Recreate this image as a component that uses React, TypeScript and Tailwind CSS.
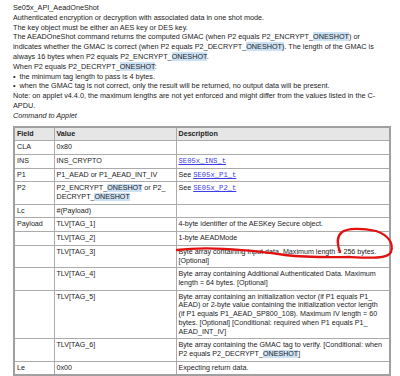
import React from "react";

const HL = ({ children }: { children: React.ReactNode }) => (
  <span className="bg-[#cde1f5]">{children}</span>
);

const Ref = ({ children }: { children: React.ReactNode }) => (
  <span className="font-['Liberation_Mono',monospace] text-[7.2px] text-[#3c3ce6] underline">{children}</span>
);

type Row = { field: string; value: React.ReactNode; desc: React.ReactNode };

const rows: Row[] = [
  { field: "CLA", value: "0x80", desc: "" },
  { field: "INS", value: "INS_CRYPTO", desc: <Ref>SE05x_INS_t</Ref> },
  { field: "P1", value: "P1_AEAD or P1_AEAD_INT_IV", desc: <>See <Ref>SE05x_P1_t</Ref></> },
  {
    field: "P2",
    value: <>P2_ENCRYPT_<HL>ONESHOT</HL> or P2_<br />DECRYPT_<HL>ONESHOT</HL></>,
    desc: <>See <Ref>SE05x_P2_t</Ref></>,
  },
  { field: "Lc", value: "#(Payload)", desc: "" },
  { field: "Payload", value: "TLV[TAG_1]", desc: "4-byte identifier of the AESKey Secure object." },
  { field: "", value: "TLV[TAG_2]", desc: "1-byte AEADMode" },
  {
    field: "",
    value: "TLV[TAG_3]",
    desc: <>Byte array containing input data. Maximum length = 256 bytes.<br />[Optional]</>,
  },
  {
    field: "",
    value: "TLV[TAG_4]",
    desc: <>Byte array containing Additional Authenticated Data. Maximum<br />length = 64 bytes. [Optional]</>,
  },
  {
    field: "",
    value: "TLV[TAG_5]",
    desc: (
      <>
        Byte array containing an initialization vector (if P1 equals P1_<br />
        AEAD) or 2-byte value containing the initialization vector length<br />
        (if P1 equals P1_AEAD_SP800_108). Maximum IV length = 60<br />
        bytes. [Optional] [Conditional: required when P1 equals P1_<br />
        AEAD_INT_IV]
      </>
    ),
  },
  {
    field: "",
    value: "TLV[TAG_6]",
    desc: <>Byte array containing the GMAC tag to verify. [Conditional: when<br />P2 equals P2_DECRYPT_<HL>ONESHOT</HL>]</>,
  },
  { field: "Le", value: "0x00", desc: "Expecting return data." },
];

export default function App() {
  const td = "border border-[#ababab] px-[2px] py-[2px] align-top";
  return (
    <div className="relative h-[376px] w-[400px] overflow-hidden bg-white font-['Liberation_Sans',Arial,sans-serif] text-[7.25px] leading-[9.8px] text-[#1c1c1c]">
      <div className="whitespace-nowrap px-[13px] pt-[3px]">
        <p>Se05x_API_AeadOneShot</p>
        <p>Authenticated encryption or decryption with associated data in one shot mode.</p>
        <p>The key object must be either an AES key or DES key.</p>
        <p>
          The AEADOneShot command returns the computed GMAC (when P2 equals P2_ENCRYPT_<HL>ONESHOT</HL>) or<br />
          indicates whether the GMAC is correct (when P2 equals P2_DECRYPT_<HL>ONESHOT)</HL>. The length of the GMAC is<br />
          always 16 bytes when P2 equals P2_ENCRYPT_<HL>ONESHOT</HL>.
        </p>
        <p>When P2 equals P2_DECRYPT_<HL>ONESHOT</HL>:</p>
        <p>• &nbsp;the minimum tag length to pass is 4 bytes.</p>
        <p>• &nbsp;when the GMAC tag is not correct, only the result will be returned, no output data will be present.</p>
        <p>
          Note: on applet v4.4.0, the maximum lengths are not yet enforced and might differ from the values listed in the C-<br />
          APDU.
        </p>
        <p className="italic">Command to Applet</p>
      </div>

      <table className="ml-[13px] mt-[5px] w-[378px] table-fixed border-collapse border-2 border-[#a0a0a0] text-[7.15px] leading-[8.7px] whitespace-nowrap">
        <colgroup>
          <col className="w-[40px]" />
          <col className="w-[122px]" />
          <col />
        </colgroup>
        <thead>
          <tr className="bg-[#e6e6e6] font-bold">
            <td className={td}>Field</td>
            <td className={td}>Value</td>
            <td className={td}>Description</td>
          </tr>
        </thead>
        <tbody>
          {rows.map((r, i) => (
            <tr key={i}>
              <td className={td}>{r.field}</td>
              <td className={td}>{r.value}</td>
              <td className={td}>{r.desc}</td>
            </tr>
          ))}
        </tbody>
      </table>

      {/* red pen annotation */}
      <svg className="pointer-events-none absolute left-0 top-0" width="400" height="376" viewBox="0 0 400 376">
        <path
          d="M177 250 C 210 246, 250 250, 285 255 C 310 258, 335 257, 350 257 C 370 258, 388 259, 391 252 C 394 243, 388 235, 376 231 C 362 228, 348 228, 342 232 C 337 236, 337 244, 340 252"
          fill="none"
          stroke="#e31010"
          strokeWidth="2.3"
          strokeLinecap="round"
        />
      </svg>
    </div>
  );
}
